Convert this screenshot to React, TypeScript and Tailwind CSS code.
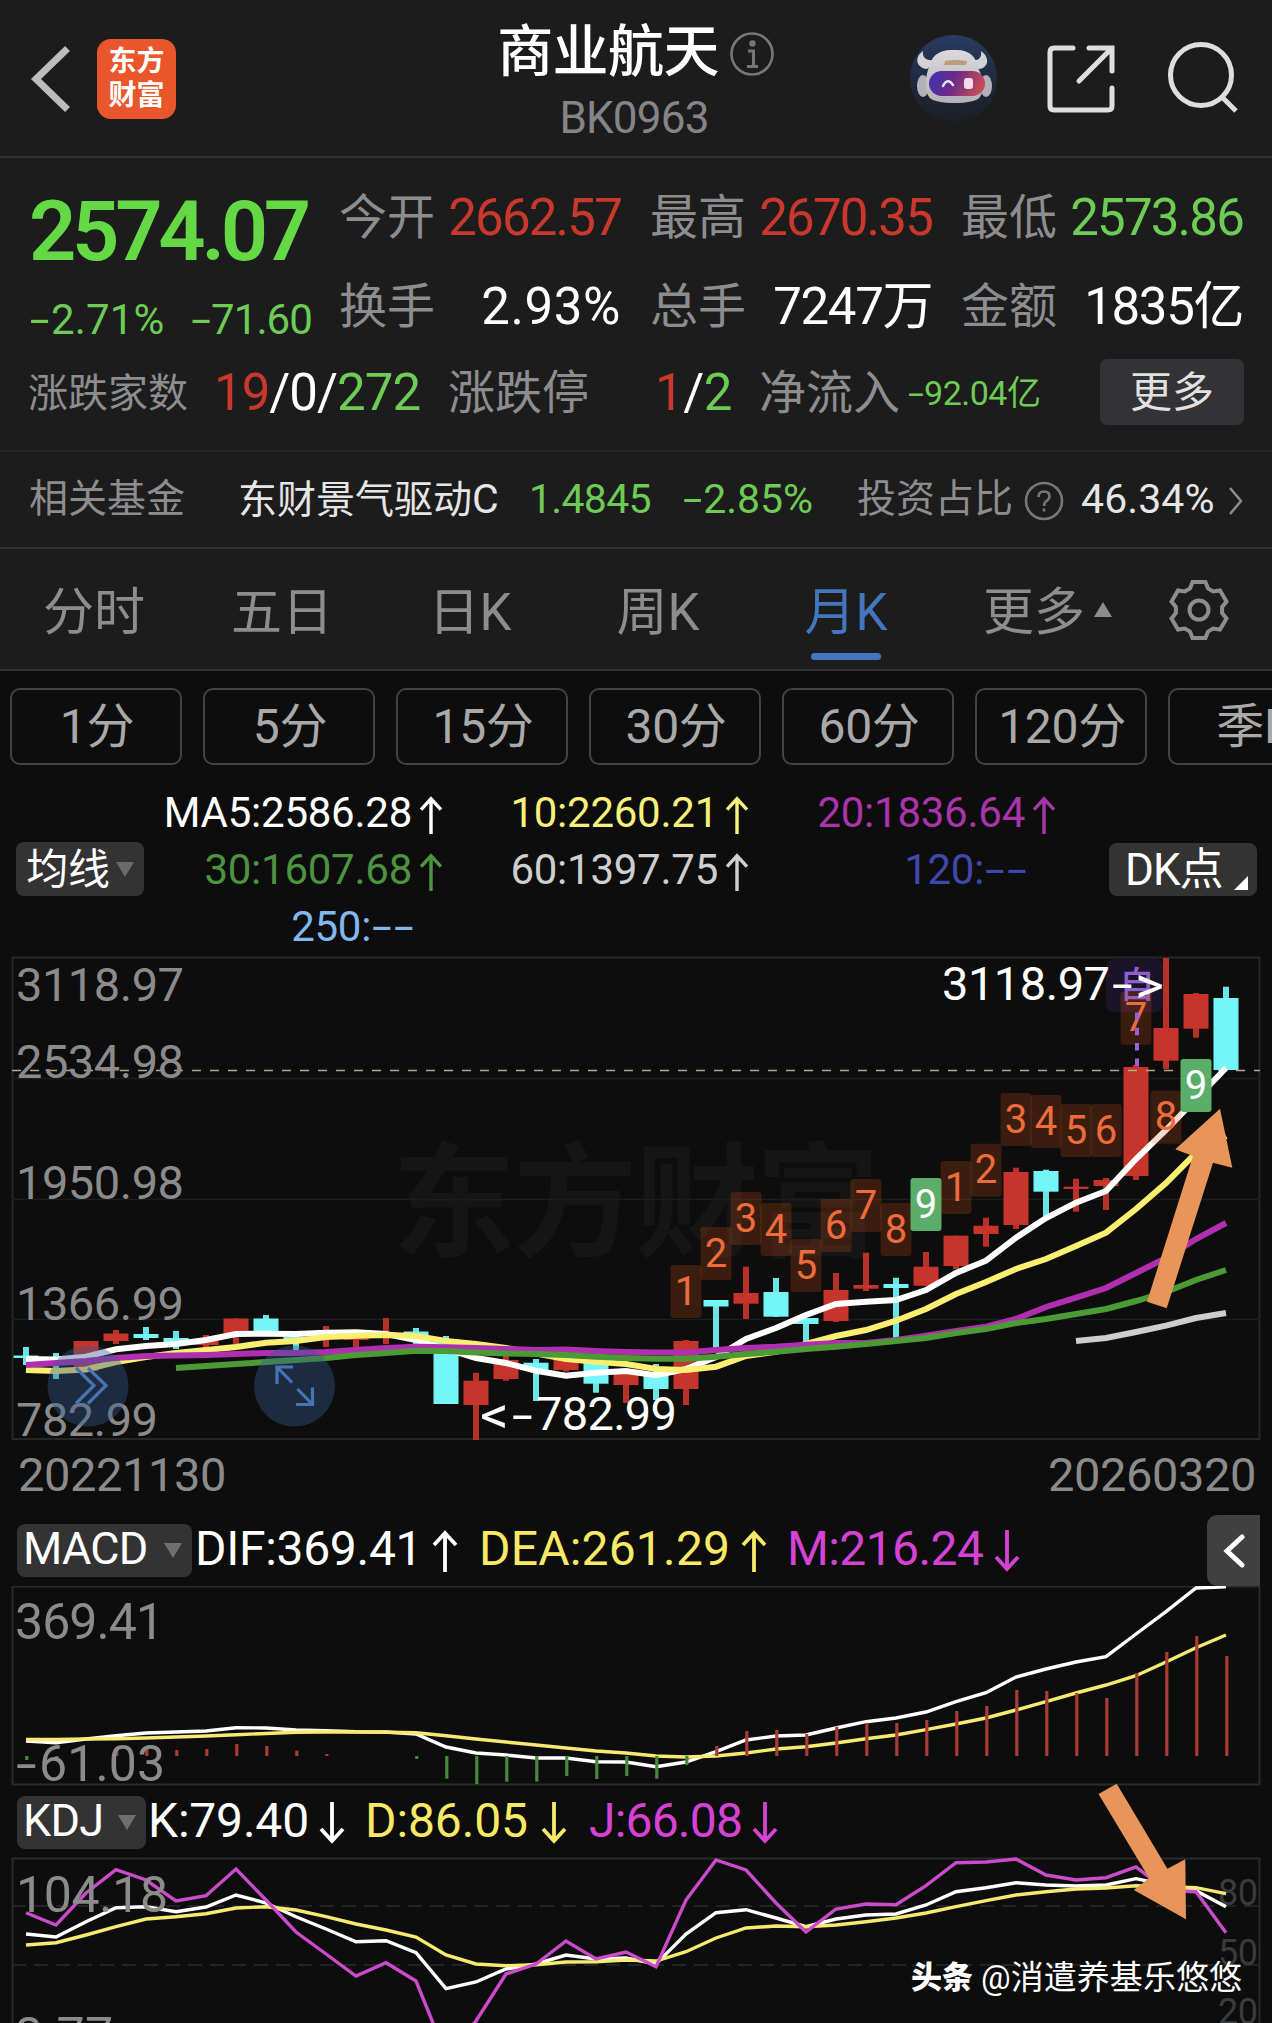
import React from "react";

const FONT = "font-['Roboto','Noto_Sans_CJK_SC',sans-serif]";

type Candle = [color: "r" | "c", high: number, top: number, bottom: number, low: number];

const candles: Candle[] = [
  ["c", 1347, 1355.5, 1358, 1365], ["c", 1353, 1357, 1360, 1379], ["r", 1341, 1341, 1371, 1371],
  ["r", 1330, 1333.5, 1341, 1344], ["c", 1327, 1334, 1338, 1340], ["c", 1331, 1338, 1343, 1349],
  ["r", 1335, 1341, 1345, 1349], ["r", 1318.5, 1318.5, 1333, 1345], ["c", 1315, 1318.5, 1332, 1332],
  ["c", 1336, 1337, 1342, 1352], ["r", 1326, 1334, 1337, 1347], ["r", 1335, 1336, 1340, 1350],
  ["r", 1318, 1332, 1336, 1344], ["c", 1328, 1331.5, 1335, 1345], ["c", 1336, 1339, 1404, 1404],
  ["r", 1372.7, 1380.7, 1405, 1440], ["r", 1353, 1360, 1379, 1380.7], ["c", 1359, 1362.7, 1370, 1401],
  ["r", 1358, 1358, 1370, 1371.5], ["c", 1362, 1362, 1383.7, 1392.7], ["r", 1371, 1371, 1385, 1403],
  ["c", 1364, 1373, 1389, 1400], ["r", 1340, 1341, 1389, 1405], ["c", 1300, 1300, 1306.5, 1348],
  ["r", 1266.7, 1293, 1303.7, 1319], ["c", 1278, 1292, 1316.7, 1316.7], ["c", 1318, 1318, 1324, 1342],
  ["r", 1273, 1290, 1321, 1322], ["r", 1252.7, 1285, 1288.7, 1291], ["c", 1277.7, 1284, 1288, 1340],
  ["r", 1252, 1266.7, 1285.7, 1285.7], ["r", 1235.7, 1235.7, 1266, 1269], ["r", 1217.7, 1225.7, 1234, 1246.7],
  ["r", 1167.7, 1172, 1225, 1229], ["c", 1169.7, 1171, 1191.7, 1217], ["r", 1178.7, 1186.7, 1189, 1211.7],
  ["r", 1178, 1180, 1186, 1210], ["r", 1065, 1067, 1176, 1180], ["r", 958, 1028, 1060.7, 1069],
  ["r", 993, 994, 1028.7, 1037.7], ["c", 986.7, 998, 1070, 1070],
];

const ma5 = [1359, 1359.5, 1356.7, 1349.3, 1346, 1344, 1340, 1334, 1333.7, 1334, 1332.7, 1332.3, 1334, 1340, 1349, 1358, 1363, 1370.7, 1375.7, 1372.7, 1371, 1375.3, 1369, 1357, 1339, 1328, 1315, 1304, 1301.7, 1300, 1290, 1273, 1260.7, 1237.7, 1218, 1202.7, 1191, 1159, 1130, 1099, 1068];
const ma10 = [1370, 1371, 1369.5, 1362, 1357, 1353, 1350, 1347, 1342.7, 1341, 1337, 1335.7, 1335, 1336, 1341, 1344, 1348, 1353.5, 1359, 1361.7, 1364, 1369, 1370, 1366.7, 1356, 1351.7, 1344, 1336, 1330, 1320.7, 1309, 1294, 1282, 1269, 1259, 1246, 1232.7, 1209, 1183, 1153, 1136];
const ma20 = [1365, 1363, 1361, 1358, 1356, 1355.5, 1355, 1354, 1353, 1353, 1352, 1350, 1348, 1346.7, 1347.3, 1348, 1349, 1350, 1349.5, 1351, 1352, 1352.5, 1352.5, 1350, 1348, 1346.7, 1344.7, 1343, 1343, 1340, 1335.7, 1331, 1326.7, 1319, 1307, 1297.7, 1288, 1273, 1258, 1239, 1223];
const ma30 = [1368, 1366, 1364, 1362, 1360, 1358, 1355, 1353, 1350.7, 1351, 1352.5, 1353.5, 1354, 1355, 1356.7, 1358, 1358.7, 1358.7, 1356.7, 1354, 1351.7, 1349, 1346.7, 1344, 1341, 1338, 1333, 1329, 1323, 1319, 1314, 1309, 1301, 1292, 1280, 1270];
const ma60 = [1341, 1338, 1332, 1325.7, 1318, 1313];

const dif = [1741, 1742.7, 1739, 1735.7, 1733, 1732, 1731, 1727.7, 1728, 1730, 1730.7, 1731.7, 1732, 1734, 1747, 1753, 1755, 1758, 1758, 1761.7, 1762, 1766.7, 1762, 1751.7, 1740, 1736, 1735, 1728, 1721.7, 1718, 1712, 1701.7, 1692.7, 1677, 1669, 1662, 1656.7, 1634, 1611.7, 1588, 1586.7];
const dea = [1739.5, 1739.5, 1739, 1738.7, 1738, 1737, 1736, 1734.7, 1733.5, 1732.3, 1732, 1732, 1732.3, 1732.7, 1735.7, 1739, 1742, 1745, 1748, 1751, 1753, 1756, 1757, 1756, 1753, 1749, 1746.7, 1743, 1738.7, 1735, 1729.7, 1724, 1718, 1710, 1701.7, 1693, 1685, 1675.7, 1662, 1647.7, 1635];
const macd: (number | null)[] = [1760, 1760, null, 1750.7, 1748, 1750, 1749, 1744, 1746, 1750.7, 1754, null, null, 1759, 1778.7, 1784, 1781.7, 1781.7, 1776, 1779, 1776, 1778.7, 1765, 1746, 1731, 1730, 1734, 1726.7, 1723, 1723, 1720, 1711, 1706, 1690, 1691, 1693, 1698, 1673, 1652, 1636, 1656];

const kLine = [1934, 1937, 1921.7, 1907.7, 1906.7, 1911.7, 1907, 1895, 1903, 1916.7, 1929, 1941.7, 1940.7, 1952.7, 1988.7, 1982, 1969, 1964, 1955, 1959, 1958, 1964, 1934, 1912.7, 1909.7, 1918, 1926.7, 1919, 1915, 1914, 1905, 1891.7, 1887.7, 1882.7, 1885, 1886, 1885, 1878.7, 1885, 1890.7, 1906.7];
const dLine = [1945, 1942.7, 1935, 1926.7, 1919, 1916.7, 1913.7, 1908, 1906.7, 1910, 1916.7, 1924, 1930, 1937, 1955, 1964, 1965.7, 1964.7, 1962, 1961.7, 1960, 1961, 1951.7, 1938, 1928, 1926, 1926.7, 1925, 1921.7, 1918, 1913, 1906.7, 1900.7, 1895, 1891.7, 1889, 1888, 1885.7, 1886.7, 1887.7, 1893.7];
const jLine = [1912.7, 1925, 1893, 1869.7, 1880, 1901, 1895.7, 1869, 1900, 1932, 1954, 1976, 1962.7, 1981, 2055, 2021, 1974, 1964, 1941, 1959, 1952, 1966.7, 1900, 1860, 1870, 1903, 1932, 1909, 1904, 1904.7, 1885.7, 1862.7, 1862, 1859, 1875, 1880, 1877.7, 1867, 1890, 1891.7, 1932.7];

const marks: [index: number, top: number, label: string][] = [
  [22, 1265, "1"], [23, 1227, "2"], [24, 1192, "3"], [25, 1203, "4"], [26, 1239, "5"], [27, 1199, "6"],
  [28, 1179, "7"], [29, 1203, "8"], [30, 1178, "9"], [31, 1161, "1"], [32, 1143.7, "2"], [33, 1093, "3"],
  [34, 1095, "4"], [35, 1104, "5"], [36, 1104, "6"], [37, 991.7, "7"], [38, 1090.7, "8"], [39, 1059, "9"],
];

const cx = (i: number) => 26 + 30 * i;
const points = (ys: number[], from = 0) => ys.map((y, i) => `${cx(i + from)},${y}`).join(" ");

/** Figures whose minus signs are drawn wide. */
function Num({ children, className = "" }: { children: string; className?: string }) {
  return (
    <span className={`whitespace-nowrap ${className}`}>
      {children.split(/(-)/).map((part, i) =>
        part === "-" ? (
          <span key={i} className="mx-[0.12em] inline-block scale-x-[1.7]">-</span>
        ) : (
          part
        ),
      )}
    </span>
  );
}

function Arrow({ down = false, className = "" }: { down?: boolean; className?: string }) {
  return (
    <svg viewBox="0 0 26 42" fill="none" stroke="currentColor" strokeWidth="3.8" className={`shrink-0 ${down ? "rotate-180" : ""} ${className}`}>
      <path d="M13 42V3M2 15L13 3L24 15" />
    </svg>
  );
}

function Triangle({ className = "" }: { className?: string }) {
  return (
    <svg viewBox="0 0 18 15" className={`h-[15px] w-[18px] shrink-0 ${className}`}>
      <path d="M0 0H18L9 15Z" fill="currentColor" />
    </svg>
  );
}

function gearPath() {
  const pts: string[] = [];
  for (let k = 0; k < 6; k++) {
    const a = (-90 + 60 * k) * (Math.PI / 180);
    const put = (r: number, t: number) =>
      pts.push(`${(31 + r * Math.cos(a) - t * Math.sin(a)).toFixed(1)} ${(31 + r * Math.sin(a) + t * Math.cos(a)).toFixed(1)}`);
    put(21.5, -9);
    put(28, -6.5);
    put(28, 6.5);
    put(21.5, 9);
  }
  return `M${pts.join("L")}Z`;
}

function Robot() {
  return (
    <svg viewBox="0 0 87 87" className="h-[87px] w-[87px]">
      <defs>
        <linearGradient id="halo" x1="0" y1="0" x2="0" y2="1">
          <stop offset="0" stopColor="#2a3b61" />
          <stop offset="0.55" stopColor="#1f283c" />
          <stop offset="1" stopColor="#1c1e24" />
        </linearGradient>
        <linearGradient id="visor" x1="0" y1="0" x2="1" y2="0.2">
          <stop offset="0" stopColor="#3a34b4" />
          <stop offset="0.5" stopColor="#6e2a86" />
          <stop offset="1" stopColor="#c04a58" />
        </linearGradient>
        <linearGradient id="shell" x1="0" y1="0" x2="0" y2="1">
          <stop offset="0" stopColor="#dcdadc" />
          <stop offset="1" stopColor="#b4b0b8" />
        </linearGradient>
      </defs>
      <circle cx="43.500" cy="43.500" r="43.500" fill="url(#halo)" />
      <ellipse cx="13" cy="51" rx="6" ry="11" fill="#b4b0b8" />
      <ellipse cx="76" cy="51" rx="6" ry="11" fill="#b4b0b8" />
      <path d="M13 16C4 22 6 33 17 34L28 24C18 27 12 24 13 16Z" fill="#d4d2d6" />
      <path d="M71 16C80 22 79 33 69 34L58 24C68 27 72 24 71 16Z" fill="#d4d2d6" />
      <path d="M44 15C58 14 66 20 69 35C74 44 74 56 70 62C65 70 24 70 19 62C15 56 15 44 18 35C21 20 30 14 44 15Z" fill="url(#shell)" />
      <path d="M35 26Q45 24 57 26L56 30H34Z" fill="#bb9c7e" />
      <rect x="19" y="36" width="56" height="25" rx="12.500" fill="url(#visor)" />
      <path d="M33 51Q37.500 42 43 50" fill="none" stroke="#dfe4ff" strokeWidth="2.500" strokeLinecap="round" />
      <rect x="54" y="43" width="9" height="11" rx="3" fill="#f2dfee" />
    </svg>
  );
}

function Header() {
  return (
    <header className="flex h-[158px] items-start border-b-2 border-[#303030]">
      <svg viewBox="0 0 40 66" className="mt-[46px] ml-[30px] h-[66px] w-[40px] shrink-0" fill="none" stroke="#bcbcbc" strokeWidth="7">
        <path d="M35 5L6 33L35 61" strokeLinecap="square" />
      </svg>
      <div className="mt-[39px] ml-[27px] flex h-[80px] w-[79px] shrink-0 flex-col items-center justify-center rounded-[14px] bg-[#ea562b] text-[28px] leading-[34px] font-bold text-white">
        <span>东方</span>
        <span>财富</span>
      </div>
      <div className="ml-[276px] flex w-[368px] flex-col items-center pt-[20px]">
        <div className="flex items-center gap-[10px]">
          <h1 className="text-[56px] leading-[64px] font-medium tracking-[-0.6px] whitespace-nowrap text-white">商业航天</h1>
          <svg viewBox="0 0 46 46" className="mt-[3px] h-[46px] w-[46px] shrink-0" fill="none" stroke="#77777a">
            <circle cx="23" cy="23" r="20.500" strokeWidth="2.600" />
            <circle cx="23.500" cy="12.500" r="3.200" fill="#77777a" stroke="none" />
            <path d="M19 20H24.500V35M18 35.500H29" strokeWidth="3" />
          </svg>
        </div>
        <span className="mt-[8px] mr-[4px] text-[44px] leading-[52px] tracking-[-0.8px] text-[#858587]">BK0963</span>
      </div>
      <div className="mt-[35px] ml-[90px] shrink-0">
        <Robot />
      </div>
      <svg viewBox="0 0 70 70" className="mt-[44px] ml-[49px] h-[70px] w-[70px] shrink-0" fill="none" stroke="#dedede" strokeWidth="5">
        <path d="M27 4H8Q4 4 4 8V62Q4 66 8 66H62Q66 66 66 62V44M43 4H66V27M65 5L33 37" strokeLinecap="round" />
      </svg>
      <svg viewBox="0 0 74 74" className="mt-[41px] ml-[51px] h-[74px] w-[74px] shrink-0" fill="none" stroke="#dedede" strokeWidth="5">
        <circle cx="34" cy="34" r="30.500" />
        <path d="M55 56L69 70" />
      </svg>
    </header>
  );
}

const LABEL = "text-[48px] text-[#8d8d90]";
const VALUE = "text-[51px]";

function Stat({ label, value, className }: { label: string; value: string; className: string }) {
  return (
    <div className="flex w-[282px] items-center justify-between leading-[50px]">
      <span className={LABEL}>{label}</span>
      <Num className={`${VALUE} ${className}`}>{value}</Num>
    </div>
  );
}

function Quote() {
  return (
    <section className="h-[294px] border-b-2 border-[#252525]">
      <div className="flex h-[183px]">
        <div className="w-[339px] shrink-0 pt-[44px] pl-[29px]">
          <div className="text-[83px] leading-[60px] font-semibold tracking-[-4.3px] text-[#65d846]">2574.07</div>
          <div className="mt-[36px] flex justify-between text-[42px] leading-[44px] text-[#6ecb55]">
            <Num className="tracking-[0.2px]">-2.71%</Num>
            <Num className="mr-[27px] tracking-[-0.9px]">-71.60</Num>
          </div>
        </div>
        <div className="flex flex-col gap-[39px] pt-[35px]">
          <div className="flex gap-[29px]">
            <Stat label="今开" value="2662.57" className="tracking-[-1.8px] text-[#c9382c]" />
            <Stat label="最高" value="2670.35" className="tracking-[-1.8px] text-[#c9382c]" />
            <Stat label="最低" value="2573.86" className="tracking-[-1.8px] text-[#6ecb55]" />
          </div>
          <div className="flex gap-[29px]">
            <Stat label="换手" value="2.93%" className="tracking-[0.6px] text-white" />
            <Stat label="总手" value="7247万" className="tracking-[-1.4px] text-white" />
            <Stat label="金额" value="1835亿" className="tracking-[-1.4px] text-white" />
          </div>
        </div>
      </div>
      <div className="mt-[18px] flex h-[66px] items-center whitespace-nowrap">
        <span className="mt-[3px] ml-[28px] w-[186px] text-[40px] text-[#8d8d90]">涨跌家数</span>
        <span className={`${VALUE} mt-[3px] w-[234px] tracking-[-1px] text-white`}>
          <span className="text-[#c9382c]">19</span>/0/<span className="text-[#6ecb55]">272</span>
        </span>
        <span className="mt-[3px] w-[207px] text-[47px] text-[#8d8d90]">涨跌停</span>
        <span className={`${VALUE} mt-[3px] w-[104px] tracking-[-0.5px] text-white`}>
          <span className="text-[#c9382c]">1</span>/<span className="text-[#6ecb55]">2</span>
        </span>
        <span className="mt-[3px] w-[148px] text-[47px] text-[#8d8d90]">净流入</span>
        <Num className="mt-[3px] w-[193px] text-[34px] tracking-[-0.5px] text-[#6ecb55]">-92.04亿</Num>
        <button className="h-[66px] w-[144px] rounded-[7px] bg-[#333335] text-[42px] text-[#e2e2e2]">更多</button>
      </div>
    </section>
  );
}

function Fund() {
  return (
    <section className="flex h-[97px] items-center border-b-2 border-[#303030] text-[39px] whitespace-nowrap">
      <span className="ml-[29px] w-[209px] text-[#8d8d90]">相关基金</span>
      <span className="w-[291px] text-[#e6e6e6]">东财景气驱动<span className="text-[41px]">C</span></span>
      <span className="w-[153px] text-[41px] tracking-[-0.7px] text-[#6ecb55]">1.4845</span>
      <Num className="w-[175px] text-[41px] text-[#6ecb55]">-2.85%</Num>
      <span className="w-[167px] text-[#8d8d90]">投资占比</span>
      <svg viewBox="0 0 40 40" className="mt-[2px] h-[40px] w-[40px]" fill="none" stroke="#77777a" strokeWidth="2.600">
        <circle cx="20" cy="20" r="18" />
        <path d="M14.500 16Q14.500 10.500 20 10.500T25.500 15.500Q25.500 18 22.500 20Q20 21.500 20 25" />
        <path d="M20 27.500V30.500" />
      </svg>
      <span className="ml-[17px] w-[146px] text-[41px] tracking-[0.1px] text-[#e6e6e6]">46.34%</span>
      <svg viewBox="0 0 16 28" className="mt-[2px] h-[28px] w-[16px]" fill="none" stroke="#8d8d90" strokeWidth="2.500">
        <path d="M3 1L14 14L3 27" />
      </svg>
    </section>
  );
}

function Tabs() {
  return (
    <nav className="flex h-[122px] border-b-2 border-[#303030] text-[51px] text-[#8d8d90]">
      {["分时", "五日", "日K", "周K", "月K"].map((tab) => (
        <div key={tab} className={`flex w-[188px] shrink-0 flex-col items-center ${tab === "月K" ? "text-[#4476bd]" : ""}`}>
          <span className="mt-[32px] leading-[64px]">{tab}</span>
          {tab === "月K" && <span className="mt-[8px] h-[7px] w-[70px] rounded-full bg-[#4476bd]" />}
        </div>
      ))}
      <div className="ml-[43px] flex items-start">
        <span className="mt-[32px] leading-[64px]">更多</span>
        <Triangle className="mt-[53px] ml-[9px] rotate-180" />
      </div>
      <svg viewBox="0 0 62 62" className="mt-[30px] ml-[56px] h-[62px] w-[62px]" fill="none" stroke="#8d8d90" strokeWidth="4">
        <path d={gearPath()} />
        <circle cx="31" cy="31" r="9.500" />
      </svg>
    </nav>
  );
}

function Periods() {
  return (
    <div className="flex gap-[21px] overflow-hidden pt-[17px] pl-[10px]">
      {["1分", "5分", "15分", "30分", "60分", "120分", "季K"].map((p) => (
        <button key={p} className="h-[77px] w-[172px] shrink-0 rounded-[10px] border-2 border-[#434343] pl-[2px] text-[48px] leading-[71px] tracking-[-0.3px] whitespace-nowrap text-[#a9a9a9]">
          {p}
        </button>
      ))}
    </div>
  );
}

function Ma({ text, arrow = false, className }: { text: string; arrow?: boolean; className: string }) {
  return (
    <div className={`flex items-center justify-end ${className}`}>
      <Num>{text}</Num>
      {arrow ? <Arrow className="mt-[5px] ml-[7px] h-[38px] w-[24px]" /> : <span className="w-[29px]" />}
    </div>
  );
}

function Averages() {
  return (
    <div className="mt-[19px] flex h-[171px] items-start text-[42px] tracking-[-0.25px]">
      <button className="mt-[58px] ml-[16px] flex h-[54px] w-[128px] shrink-0 items-center justify-center gap-[6px] rounded-[8px] bg-[#333333] text-[42px] text-white">
        <span>均线</span>
        <Triangle className="text-[#6a6a6a]" />
      </button>
      <div className="grid w-[912px] shrink-0 grid-cols-[299px_306px_307px] grid-rows-[57px_57px_57px]">
        <Ma text="MA5:2586.28" arrow className="text-white" />
        <Ma text="10:2260.21" arrow className="text-[#f8f07c]" />
        <Ma text="20:1836.64" arrow className="text-[#aa35aa]" />
        <Ma text="30:1607.68" arrow className="text-[#4c9440]" />
        <Ma text="60:1397.75" arrow className="text-[#cfcfcf]" />
        <Ma text="120:--" className="text-[#4048ae]" />
        <Ma text="250:--" className="text-[#82b8ec]" />
      </div>
      <button className="mt-[59px] ml-[53px] flex h-[53px] w-[148px] shrink-0 items-center rounded-[8px] bg-[#333333] pl-[16px] text-[44px] tracking-[-1px] text-white">
        <span className="whitespace-nowrap">DK点</span>
        <svg viewBox="0 0 14 14" className="mt-[26px] ml-[12px] h-[14px] w-[14px] shrink-0">
          <path d="M14 0V14H0Z" fill="#fff" />
        </svg>
      </button>
    </div>
  );
}

function KChart() {
  const line = "fill-none stroke-[6px]";
  return (
    <svg viewBox="0 955 1272 490" className={`block h-[490px] w-[1272px] shrink-0 ${FONT}`}>
      <text x="392" y="1247" textLength="488" className="fill-[#151515] text-[124px] font-bold">东方财富</text>
      <path d="M12.500 957.500H1259.500V1439H12.500Z" fill="none" stroke="#262626" strokeWidth="2" />
      <path d="M12 1078.500H1260M12 1199.500H1260M12 1319.500H1260" stroke="#1d1d1d" strokeWidth="1.500" />
      {candles.map(([c, high, top, bottom, low], i) => (
        <g key={i} className={c === "r" ? "fill-[#c6342b]" : "fill-[#74f5f7]"}>
          <rect x={cx(i) - 3} y={high} width="6" height={low - high} opacity="0.92" />
          <rect x={cx(i) - 12.5} y={top} width="25" height={bottom - top} />
        </g>
      ))}
      <path d="M12 1070.500H1260" stroke="#b5a88a" strokeWidth="1.500" strokeDasharray="9 9" />
      <polyline points={points(ma5)} className={`${line} stroke-white`} />
      <polyline points={points(ma10)} className={`${line} stroke-[#fbef72]`} />
      <polyline points={points(ma20)} className={`${line} stroke-[#b02fb0]`} />
      <polyline points={points(ma30, 5)} className={`${line} stroke-[#4b9a35]`} />
      <polyline points={points(ma60, 35)} className={`${line} stroke-[#cdcdcd]`} />
      <rect x="1106" y="959" width="57" height="53" rx="8" fill="#1b1428" />
      <text x="1119" y="998" className="fill-[#8f5fd0] text-[36px] font-medium">自</text>
      {marks.map(([i, top, label], n) => {
        const nine = label === "9";
        return (
          <g key={n}>
            <rect x={cx(i) - 15.5} y={top} width="31" height="53" rx="3" fill={nine ? "#5bae69" : "#e0571d"} fillOpacity={nine ? 1 : 0.22} />
            <text x={cx(i)} y={top + 39.5} textAnchor="middle" className={`text-[40px] ${nine ? "fill-white" : "fill-[#ee6c3c]"}`}>{label}</text>
          </g>
        );
      })}
      <path d="M1137 1012.500V1067" stroke="#9a5fd6" strokeWidth="4" strokeDasharray="7.500 7.800" />
      <g className="fill-[#8b8b8b] text-[47px]">
        <text x="16" y="1001" textLength="168">3118.97</text>
        <text x="16" y="1078" textLength="168">2534.98</text>
        <text x="16" y="1199" textLength="168">1950.98</text>
        <text x="16" y="1319.500" textLength="168">1366.99</text>
        <text x="16" y="1436" textLength="142">782.99</text>
      </g>
      <g className="fill-white text-[47px]">
        <text x="942" y="1000" textLength="168">3118.97</text>
        <text transform="translate(1112 1000) scale(1.6 1)">-</text>
        <text x="1135" y="1003" textLength="29" lengthAdjust="spacingAndGlyphs" className="text-[52px]">&gt;</text>
        <text x="480" y="1433" textLength="29" lengthAdjust="spacingAndGlyphs" className="text-[52px]">&lt;</text>
        <text transform="translate(512 1431) scale(1.6 1)">-</text>
        <text x="536" y="1430" textLength="141">782.99</text>
      </g>
      <g fill="#35598f" fillOpacity="0.4">
        <circle cx="88" cy="1386" r="40.500" />
        <circle cx="294.500" cy="1386" r="40.500" />
      </g>
      <g fill="none" stroke="#4674b6" strokeWidth="3.200">
        <path d="M76 1368L94 1385.500L76 1403.500M88 1368L106 1385.500L88 1403.500" />
        <path d="M293 1367H277V1384M277 1367L292 1382.500M296 1404.500H312.500V1387.500M312.500 1404.500L297.500 1389" />
      </g>
      <path d="M1220 1108.700L1232.300 1167.700L1213 1162.700L1166.700 1308.300L1147 1301.700L1193 1156L1175.300 1149.300Z" fill="#e79558" />
    </svg>
  );
}

function IndicatorButton({ name, className }: { name: string; className: string }) {
  return (
    <button className={`flex h-[53px] shrink-0 items-center justify-between rounded-[8px] bg-[#333333] pr-[10px] pl-[6px] text-[45px] tracking-[-0.8px] text-white ${className}`}>
      <span className="-mt-[3px]">{name}</span>
      <Triangle className="text-[#6f6f6f]" />
    </button>
  );
}

function Reading({ text, down = false, className }: { text: string; down?: boolean; className: string }) {
  return (
    <div className={`flex shrink-0 items-center justify-between text-[48px] whitespace-nowrap ${className}`}>
      <span className="-mt-[3px]">{text}</span>
      <Arrow down={down} className="h-[42px] w-[26px]" />
    </div>
  );
}

function Macd() {
  return (
    <>
      <div className="flex h-[71px] items-center">
        <IndicatorButton name="MACD" className="ml-[17px] w-[175px]" />
        <Reading text="DIF:369.41" className="ml-[3px] w-[263px] tracking-[-0.3px] text-white" />
        <Reading text="DEA:261.29" className="ml-[21px] w-[288px] tracking-[0.2px] text-[#f8ea66]" />
        <Reading text="M:216.24" down className="ml-[20px] w-[233px] tracking-[-0.6px] text-[#d543d5]" />
        <button className="ml-auto mr-[12px] flex h-[71px] w-[53px] items-center justify-center rounded-l-[10px] bg-[#404040]">
          <svg viewBox="0 0 24 34" className="h-[34px] w-[24px]" fill="none" stroke="#fff" strokeWidth="5">
            <path d="M20 3L5 17L20 31" strokeLinecap="round" />
          </svg>
        </button>
      </div>
      <svg viewBox="0 1586 1272 202" className={`block h-[202px] w-[1272px] shrink-0 ${FONT}`}>
        <path d="M12.500 1586.500H1259.500V1784.500H12.500Z" fill="none" stroke="#2a2a2a" strokeWidth="2" />
        <polyline points={points(dif)} className="fill-none stroke-white stroke-[3.4px]" />
        <polyline points={points(dea)} className="fill-none stroke-[#f6ea70] stroke-[3.4px]" />
        {macd.map((y, i) =>
          y === null ? null : (
            <rect key={i} x={cx(i) - 0.8} y={Math.min(y, 1756)} width="3.200" height={Math.abs(y - 1756)} fill={y < 1756 ? "#a83c36" : "#47893c"} />
          ),
        )}
        <g className="fill-[#8b8b8b] text-[50px]">
          <text x="15" y="1638.500" textLength="149">369.41</text>
          <text transform="translate(16 1781) scale(1.5 1)">-</text>
          <text x="39" y="1781" textLength="126">61.03</text>
        </g>
      </svg>
    </>
  );
}

function Kdj() {
  return (
    <>
      <div className="flex h-[69px] items-center">
        <IndicatorButton name="KDJ" className="ml-[17px] w-[129px]" />
        <Reading text="K:79.40" down className="ml-[2px] w-[197px] tracking-[-0.2px] text-white" />
        <Reading text="D:86.05" down className="ml-[20px] w-[202px] tracking-[-0.1px] text-[#f8ea66]" />
        <Reading text="J:66.08" down className="ml-[22px] w-[189px] tracking-[-0.8px] text-[#d543d5]" />
      </div>
      <svg viewBox="0 1857 1272 166" className={`block h-[166px] w-[1272px] shrink-0 ${FONT}`}>
        <path d="M12.500 2030V1858.500H1259.500V2030" fill="none" stroke="#2a2a2a" strokeWidth="2" />
        <path d="M12 1906H1260M12 1965H1260" stroke="#2b2b2b" strokeWidth="1.500" strokeDasharray="14 8" />
        <g className="fill-[#3b3b3b] text-[36px]">
          <text x="1218" y="1905" textLength="40">80</text>
          <text x="1218" y="1965" textLength="40">50</text>
          <text x="1218" y="2024" textLength="40">20</text>
        </g>
        <polyline points={points(kLine)} className="fill-none stroke-white stroke-[3.4px]" />
        <polyline points={points(dLine)} className="fill-none stroke-[#f6ea70] stroke-[3.4px]" />
        <polyline points={points(jLine)} className="fill-none stroke-[#cc4bcc] stroke-[3.4px]" />
        <g className="fill-[#8b8b8b] text-[50px]">
          <text x="16" y="1911.500" textLength="152">104.18</text>
          <text x="15" y="2053" textLength="98">3.77</text>
        </g>
        <g className="fill-white">
          <text x="911" y="1988" textLength="62" className="text-[31px] font-black">头条</text>
          <text x="981" y="1989" textLength="261" className="text-[33px]">@消遣养基乐悠悠</text>
        </g>
      </svg>
    </>
  );
}

export default function App() {
  return (
    <div className={`relative flex h-[2023px] w-[1272px] flex-col overflow-hidden bg-[#0d0d0d] ${FONT}`}>
      <div className="shrink-0 bg-[#1c1c1c]">
        <Header />
        <Quote />
        <Fund />
        <Tabs />
      </div>
      <Periods />
      <Averages />
      <KChart />
      <div className="flex h-[70px] shrink-0 items-start justify-between pr-[16px] pl-[18px] text-[47px] leading-[60px] tracking-[-0.4px] text-[#8b8b8b]">
        <span>20221130</span>
        <span>20260320</span>
      </div>
      <Macd />
      <Kdj />
      <svg viewBox="0 0 90 138" className="absolute top-[1783px] left-[1098px] h-[138px] w-[90px]">
        <path d="M18.700 0.700L0.500 11L51 95L35.800 107L88 136.300L87.300 76.300L69.400 85.700Z" fill="#e79558" />
      </svg>
    </div>
  );
}
